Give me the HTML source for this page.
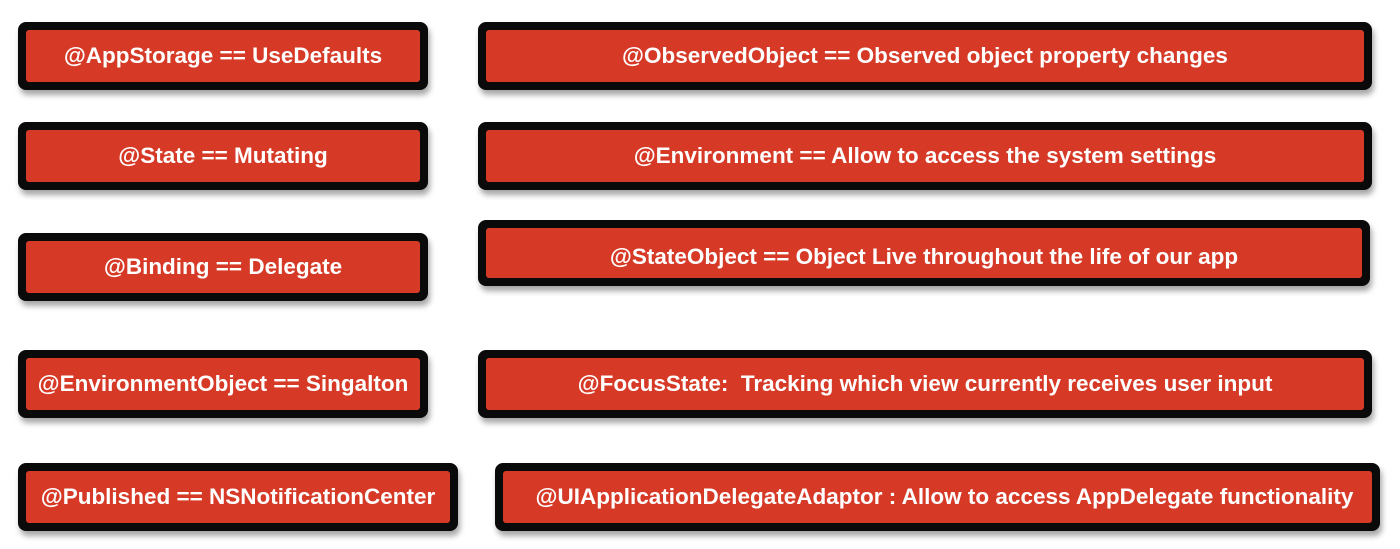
<!DOCTYPE html>
<html><head><meta charset="utf-8"><style>
body{margin:0;width:1400px;height:549px;background:#fff;position:relative;overflow:hidden;font-family:"Liberation Sans",Arial,sans-serif}
.b{position:absolute;background:#0a0a0a;border-radius:8px;box-shadow:2px 5px 6px rgba(0,0,0,.35)}
.b div{position:absolute;left:8px;right:8px;top:8px;bottom:8px;background:#d63a27;border-radius:3px;color:#fff;font-weight:bold;font-size:22.5px;display:flex;align-items:center;justify-content:center;white-space:nowrap;overflow:hidden}
</style></head><body>
<div class="b" style="left:18px;top:22px;width:410px;height:68px"><div>@AppStorage == UseDefaults</div></div>
<div class="b" style="left:18px;top:122px;width:410px;height:68px"><div>@State == Mutating</div></div>
<div class="b" style="left:18px;top:233px;width:410px;height:68px"><div>@Binding == Delegate</div></div>
<div class="b" style="left:18px;top:350px;width:410px;height:68px"><div>@EnvironmentObject == Singalton</div></div>
<div class="b" style="left:18px;top:463px;width:440px;height:68px"><div>@Published == NSNotificationCenter</div></div>
<div class="b" style="left:478px;top:22px;width:894px;height:68px"><div>@ObservedObject == Observed object property changes</div></div>
<div class="b" style="left:478px;top:122px;width:894px;height:68px"><div>@Environment == Allow to access the system settings</div></div>
<div class="b" style="left:478px;top:220px;width:892px;height:66px"><div style="align-items:flex-start;padding-top:16px;box-sizing:border-box">@StateObject == Object Live throughout the life of our app</div></div>
<div class="b" style="left:478px;top:350px;width:894px;height:68px"><div>@FocusState:&nbsp; Tracking which view currently receives user input</div></div>
<div class="b" style="left:495px;top:463px;width:885px;height:68px"><div style="padding-left:14px">@UIApplicationDelegateAdaptor : Allow to access AppDelegate functionality</div></div>
</body></html>
